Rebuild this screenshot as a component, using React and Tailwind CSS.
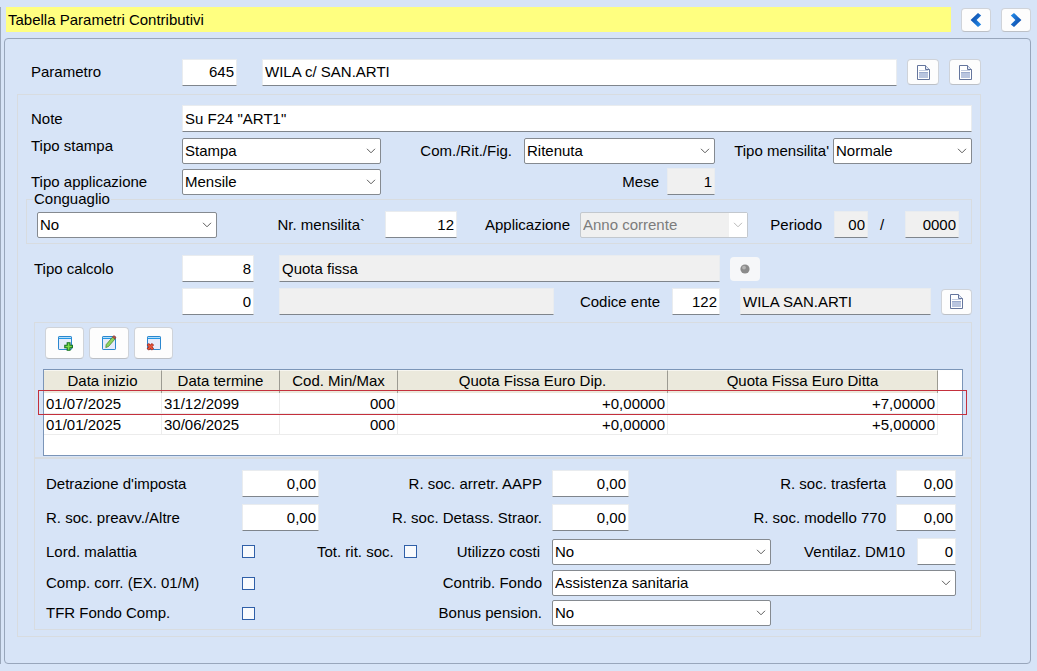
import { useId } from "react";

const fieldBase =
  "min-w-0 h-[27px] border border-t-[#e9ecef] border-l-[#e9ecef] border-r-[#e9ecef] border-b-[#7f858c] px-0.5 pb-px outline-none";

function Field({ id, label, value, disabled, right, className = "" }) {
  const tone = disabled ? "bg-[#f0f0f0] text-black" : "bg-white";
  return (
    <input
      id={id}
      type="text"
      aria-label={label}
      defaultValue={value}
      readOnly={disabled}
      className={`${fieldBase} ${tone} ${right ? "text-right" : ""} ${className}`}
    />
  );
}

function Select({ id, value, disabled, className = "" }) {
  return (
    <div className={`relative h-[26px] ${className}`}>
      <select
        id={id}
        disabled={disabled}
        defaultValue={value}
        className={`h-full w-full appearance-none rounded-xs border pl-0.5 pr-6 outline-none ${
          disabled
            ? "border-[#c3c8ce] bg-[#f0f0f0] text-[#7c7c7c] opacity-100"
            : "border-[#858a90] bg-white text-black"
        }`}
      >
        <option>{value}</option>
      </select>
      <span
        className={`pointer-events-none absolute inset-y-px right-px flex w-[18px] items-center justify-center ${
          disabled ? "bg-white text-[#b9b9b9]" : "text-[#5c5c5c]"
        }`}
      >
        <svg width="10" height="6" viewBox="0 0 10 6" fill="none" stroke="currentColor" strokeWidth="1">
          <path d="M1 .8 5 4.8 9 .8" />
        </svg>
      </span>
    </div>
  );
}

function Label({ htmlFor, className = "", children }) {
  return (
    <label htmlFor={htmlFor} className={`whitespace-nowrap ${className}`}>
      {children}
    </label>
  );
}

function Check({ id }) {
  return (
    <input
      id={id}
      type="checkbox"
      className="h-[13px] w-[13px] shrink-0 appearance-none border border-[#2f5fa8] bg-[#f8fafd] checked:bg-[#2f5fa8]"
    />
  );
}

function IconButton({ label, className = "", children }) {
  return (
    <button
      type="button"
      aria-label={label}
      className={`flex shrink-0 items-center justify-center rounded-[4px] border border-[#cfd3d9] border-b-[#bcc0c6] bg-[#fdfdfd] ${className}`}
    >
      {children}
    </button>
  );
}

function NavArrow({ flip }) {
  const id = useId();
  return (
    <svg width="12" height="14" viewBox="0 0 12 14" className={flip ? "rotate-180" : ""}>
      <defs>
        <linearGradient id={id} x1="0" y1="0" x2="1" y2="1">
          <stop offset="0" stopColor="#0a3f9e" />
          <stop offset="1" stopColor="#2490ee" />
        </linearGradient>
      </defs>
      <path d="M8 0 11.2 2.6 6.6 7 11.2 11.4 8 14 .6 7Z" fill={`url(#${id})`} />
    </svg>
  );
}

function DocIcon() {
  return (
    <svg width="13" height="15" viewBox="0 0 13 15">
      <path d="M.5 .5H8.5L12.5 4.5V14.5H.5Z" fill="#fff" stroke="#64759d" />
      <path d="M8.5 .5V4.5H12.5" fill="#dfe6f3" stroke="#64759d" />
      <path d="M2 5.5H11" stroke="#c3cce0" />
      <path d="M2 7H11V13H2Z" fill="#b9c5df" />
      <path d="M2 7.5H11" stroke="#9cabcd" />
    </svg>
  );
}

function WindowIcon({ children }) {
  return (
    <svg width="16" height="16" viewBox="0 0 16 16">
      <rect x="1.5" y="1.5" width="13" height="13" rx=".6" fill="#e6ebfb" stroke="#2b87cf" />
      <path d="M2 2.5H14" stroke="#b5def9" />
      <path d="M1.5 3.5H14.5" stroke="#2196e3" />
      {children}
    </svg>
  );
}

const rows = [
  ["01/07/2025", "31/12/2099", "000", "+0,00000", "+7,00000"],
  ["01/01/2025", "30/06/2025", "000", "+0,00000", "+5,00000"],
];
const heads = ["Data inizio", "Data termine", "Cod. Min/Max", "Quota Fissa Euro Dip.", "Quota Fissa Euro Ditta"];

function RateTable() {
  return (
    <div className="relative min-h-[87px] border border-[#7b95b8] bg-white pr-6">
      <table className="w-full table-fixed border-separate border-spacing-0">
        <colgroup>
          <col className="w-[118px]" />
          <col className="w-[118px]" />
          <col className="w-[118px]" />
          <col />
          <col />
        </colgroup>
        <thead>
          <tr className="h-[23px] bg-[#ebe9dc]">
            {heads.map((h) => (
              <th key={h} className="border-t border-r border-t-[#f7f6f0] border-r-[#9c9b92] p-0 pb-0.5 font-normal">
                {h}
              </th>
            ))}
          </tr>
        </thead>
        <tbody>
          {rows.map((r) => (
            <tr key={r[0]} className="h-[21px]">
              {r.map((c, i) => (
                <td
                  key={i}
                  className={`border-r border-b border-[#ececec] px-0.5 pt-0.5 pb-0 ${i > 1 ? "text-right" : ""}`}
                >
                  {c}
                </td>
              ))}
            </tr>
          ))}
        </tbody>
      </table>
      <div className="pointer-events-none absolute top-5 -right-[5px] -left-1.5 h-[25px] border border-[#c4303c]" />
    </div>
  );
}

export default function App() {
  return (
    <main className="min-h-screen bg-[#d7e4f7] pt-[7px] pr-1.5 pb-[6px] font-['Liberation_Sans',Arial,sans-serif] text-[15px] leading-[18px] text-black">
      <div className="border-l border-[#9aa7ba] pl-[3px]">
        <header className="flex items-center pl-0.5">
          <h1 className="flex h-[25px] flex-1 items-center bg-[#ffff80] pl-0.5">Tabella Parametri Contributivi</h1>
          <IconButton label="Precedente" className="ml-2.5 h-6 w-[30px]">
            <NavArrow />
          </IconButton>
          <IconButton label="Successivo" className="ml-2.5 h-6 w-[30px]">
            <NavArrow flip />
          </IconButton>
        </header>

        <section className="mt-1.5 rounded-[4px] border border-[#98a6bb] pt-[19px] pr-[49px] pb-[26px] pl-3">
          <div className="flex h-7 items-center pl-[14px]">
            <Label htmlFor="parametro" className="w-[151px]">Parametro</Label>
            <Field id="parametro" value="645" right className="w-[55px]" />
            <Field label="Descrizione parametro" value="WILA c/ SAN.ARTI" className="ml-[25px] flex-1" />
            <IconButton label="Documento" className="ml-2.5 h-[26px] w-8"><DocIcon /></IconButton>
            <IconButton label="Elenco" className="ml-2.5 h-[26px] w-8"><DocIcon /></IconButton>
          </div>

          <div className="mt-2 border border-[#d8dce0] pt-2.5 pb-1.5 pr-2">
            <div className="flex items-center pl-[13px]">
              <Label htmlFor="note" className="w-[151px]">Note</Label>
              <Field id="note" value={'Su F24 "ART1"'} className="flex-1" />
            </div>

            <div className="mt-1.5 flex items-center pl-[13px]">
              <Label htmlFor="stampa" className="w-[151px] self-start leading-4">Tipo stampa</Label>
              <Select id="stampa" value="Stampa" className="w-[199px]" />
              <Label htmlFor="crf" className="flex-1 pr-3 text-right">Com./Rit./Fig.</Label>
              <Select id="crf" value="Ritenuta" className="w-[191px]" />
              <Label htmlFor="tipomens" className="w-[118px] pr-1 text-right">Tipo mensilita'</Label>
              <Select id="tipomens" value="Normale" className="w-[139px]" />
            </div>

            <div className="mt-1 flex items-center pl-[13px]">
              <Label htmlFor="applicazione" className="w-[151px]">Tipo applicazione</Label>
              <Select id="applicazione" value="Mensile" className="w-[199px]" />
              <Label htmlFor="mese" className="flex-1 pr-2 text-right">Mese</Label>
              <Field id="mese" value="1" right disabled className="mr-[257px] w-12" />
            </div>

            <fieldset className="-mt-[5px] ml-2 border border-[#d8dce0] pt-[3px] pr-3 pb-[5px] pl-2.5">
              <legend className="-ml-1 px-px">Conguaglio</legend>
              <div className="flex items-center">
                <Select id="cong" value="No" className="w-[180px]" />
                <Label htmlFor="nrmens" className="flex-1 pr-5 text-right">Nr. mensilita`</Label>
                <Field id="nrmens" value="12" right className="w-[72px]" />
                <Label htmlFor="appl" className="w-[123px] pr-2.5 text-right">Applicazione</Label>
                <Select id="appl" value="Anno corrente" disabled className="w-[168px]" />
                <Label htmlFor="periodo" className="w-[86px] pr-3 text-right">Periodo</Label>
                <Field id="periodo" value="00" right disabled className="w-[34px]" />
                <span className="w-[37px] pl-3">/</span>
                <Field label="Anno periodo" value="0000" right disabled className="w-[54px]" />
              </div>
            </fieldset>

            <div className="mt-[11px] flex items-center pl-4">
              <Label htmlFor="calcolo" className="w-[148px]">Tipo calcolo</Label>
              <Field id="calcolo" value="8" right className="w-[72px]" />
              <Field label="Descrizione calcolo" value="Quota fissa" disabled className="ml-[25px] flex-1" />
              <button
                type="button"
                disabled
                aria-label="Dettaglio calcolo"
                className="mr-[212px] ml-2.5 flex h-6 w-[30px] items-center justify-center rounded-[4px] bg-[#f6f7f9]"
              >
                <svg width="10" height="10" viewBox="0 0 10 10">
                  <circle cx="5" cy="5" r="4.6" fill="#8b8b8b" />
                  <circle cx="4" cy="3.6" r="1.9" fill="#b4b4b4" />
                </svg>
              </button>
            </div>

            <div className="mt-1.5 flex items-center pl-[164px]">
              <Field label="Valore calcolo" value="0" right className="w-[72px]" />
              <Field label="Descrizione valore" value="" disabled className="ml-[25px] flex-1" />
              <Label htmlFor="ente" className="w-[118px] pr-3 text-right">Codice ente</Label>
              <Field id="ente" value="122" right className="w-12" />
              <Field label="Descrizione ente" value="WILA SAN.ARTI" disabled className="ml-5 w-[191px]" />
              <IconButton label="Documento ente" className="ml-2.5 h-[26px] w-[31px]"><DocIcon /></IconButton>
            </div>

            <div className="mt-[7px] ml-4 border border-[#d8dce0] px-2 pt-1 pb-px">
              <div className="mb-2.5 flex gap-[5px] pl-0.5">
                <IconButton label="Aggiungi" className="h-8 w-[39px]">
                  <WindowIcon>
                    <path d="M10.2 7.8H13V10.2H15.4V12.8H13V15.3H10.2V12.8H7.8V10.2H10.2Z" fill="#7ddc4c" stroke="#12701f" strokeWidth="1.1" />
                  </WindowIcon>
                </IconButton>
                <IconButton label="Modifica" className="h-8 w-10">
                  <WindowIcon>
                    <path d="M5.2 9.6 11.6 2 14 4 7.6 11.4 4.8 12.6Z" fill="#8fd45f" stroke="#4c8a35" strokeWidth=".8" />
                    <path d="M11.4 2 13 .6 15 2.4 14 4Z" fill="#c4503f" stroke="#8e4038" strokeWidth=".6" />
                  </WindowIcon>
                </IconButton>
                <IconButton label="Elimina" className="h-8 w-[39px]">
                  <WindowIcon>
                    <path d="M1.8 9 7 14.6M7 9 1.8 14.6" stroke="#a92b1e" strokeWidth="3" />
                    <path d="M2.2 9.4 6.6 14.2M6.6 9.4 2.2 14.2" stroke="#ea5a40" strokeWidth="1.5" />
                  </WindowIcon>
                </IconButton>
              </div>
              <RateTable />
            </div>

            <div className="ml-4 grid grid-cols-[196px_77px_minmax(0,1fr)_77px_267px_60px] items-center border border-[#d8dce0] pt-[11px] pr-[15px] pb-[3px] pl-[11px]">
              <Label htmlFor="detr">Detrazione d'imposta</Label>
              <Field id="detr" value="0,00" right />
              <Label htmlFor="arretr" className="pr-2.5 text-right">R. soc. arretr. AAPP</Label>
              <Field id="arretr" value="0,00" right />
              <Label htmlFor="trasf" className="pr-2.5 text-right">R. soc. trasferta</Label>
              <Field id="trasf" value="0,00" right />

              <Label htmlFor="preavv" className="mt-[7px]">R. soc. preavv./Altre</Label>
              <Field id="preavv" value="0,00" right className="mt-[7px]" />
              <Label htmlFor="detass" className="mt-[7px] pr-2.5 text-right">R. soc. Detass. Straor.</Label>
              <Field id="detass" value="0,00" right className="mt-[7px]" />
              <Label htmlFor="m770" className="mt-[7px] pr-2.5 text-right">R. soc. modello 770</Label>
              <Field id="m770" value="0,00" right className="mt-[7px]" />

              <Label htmlFor="lord" className="mt-[7px]">Lord. malattia</Label>
              <div className="mt-[7px] flex"><Check id="lord" /></div>
              <div className="mt-[7px] flex items-center justify-end pr-3">
                <Label htmlFor="tot" className="pr-2.5">Tot. rit. soc.</Label>
                <Check id="tot" />
                <Label htmlFor="utilizzo" className="pl-10">Utilizzo costi</Label>
              </div>
              <div className="col-span-3 mt-[7px] flex items-center">
                <Select id="utilizzo" value="No" className="w-[219px]" />
                <Label htmlFor="dm10" className="flex-1 pr-3 text-right">Ventilaz. DM10</Label>
                <Field id="dm10" value="0" right className="w-[39px]" />
              </div>

              <Label htmlFor="comp" className="mt-[5px]">Comp. corr. (EX. 01/M)</Label>
              <div className="mt-[5px] flex"><Check id="comp" /></div>
              <Label htmlFor="fondo" className="mt-[5px] pr-2.5 text-right">Contrib. Fondo</Label>
              <Select id="fondo" value="Assistenza sanitaria" className="col-span-3 mt-[5px]" />

              <Label htmlFor="tfr" className="mt-1">TFR Fondo Comp.</Label>
              <div className="mt-1 flex"><Check id="tfr" /></div>
              <Label htmlFor="bonus" className="mt-1 pr-2.5 text-right">Bonus pension.</Label>
              <div className="col-span-3 mt-1">
                <Select id="bonus" value="No" className="w-[219px]" />
              </div>
            </div>
          </div>
        </section>
      </div>
    </main>
  );
}
